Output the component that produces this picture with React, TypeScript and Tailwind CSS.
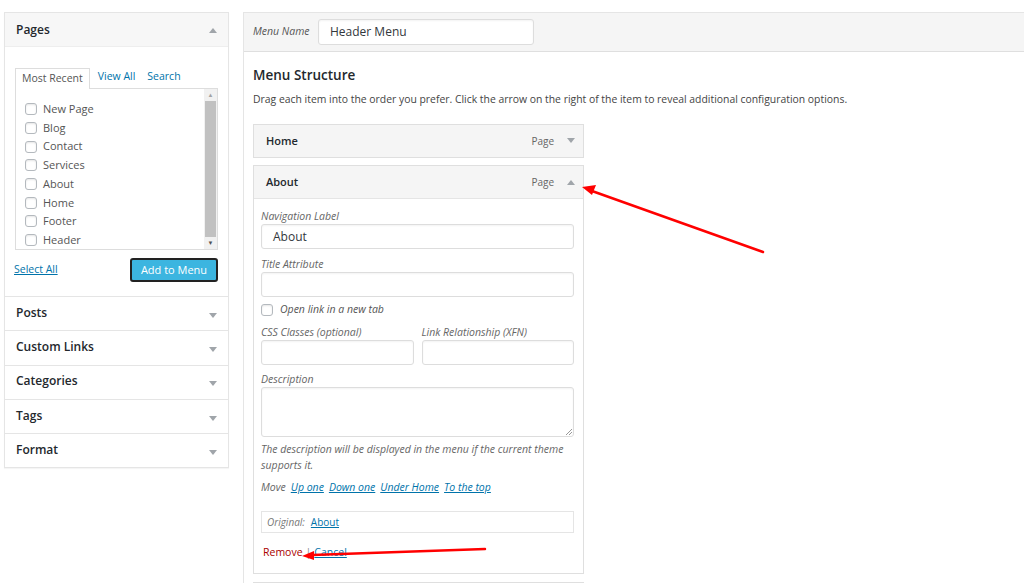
import React from 'react';

const pages = ['New Page', 'Blog', 'Contact', 'Services', 'About', 'Home', 'Footer', 'Header'];
const sections = ['Posts', 'Custom Links', 'Categories', 'Tags', 'Format'];

function Tri({ up }: { up?: boolean }) {
  return (
    <svg width="8" height="6" viewBox="0 0 8 6" className="block">
      {up ? <path d="M0 6 L4 1 L8 6 Z" fill="#a0a5aa" /> : <path d="M0 0 L4 5 L8 0 Z" fill="#a0a5aa" />}
    </svg>
  );
}

function Check() {
  return <span className="inline-block w-[12px] h-[12px] rounded-[3px] border border-[#b4b9be] bg-white shadow-[inset_0_1px_2px_rgba(0,0,0,0.1)] shrink-0" />;
}

function Input({ value, w = 'w-full', h = 'h-[25px]' }: { value?: string; w?: string; h?: string }) {
  return (
    <div className={`${w} ${h} border border-[#ddd] rounded-[3px] bg-white shadow-[inset_0_1px_2px_rgba(0,0,0,0.05)] flex items-center px-[11px] text-[12px] text-[#32373c]`}>
      {value}
    </div>
  );
}

function Label({ children }: { children: React.ReactNode }) {
  return <div className="h-[16px] leading-[16px] text-[10.5px] italic text-[#666]">{children}</div>;
}

export default function App() {
  return (
    <div className="relative w-[1024px] h-[583px] overflow-hidden bg-white" style={{ fontFamily: '"Open Sans", sans-serif' }}>
      <div className="flex items-start pt-[12px]">
        {/* left column */}
        <div className="ml-[4px] w-[225px] border border-[#e5e5e5] bg-white shadow-[0_1px_1px_rgba(0,0,0,0.04)] shrink-0">
          <div className="h-[34px] bg-[#f7f7f7] border-b border-[#eee] flex items-center justify-between pl-[11px] pr-[11px]">
            <span className="text-[12px] font-semibold text-[#23282d]">Pages</span>
            <Tri up />
          </div>
          <div className="px-[10px] pt-[20px] pb-[14px]">
            <div className="flex items-end h-[21px] text-[10.5px]">
              <div className="h-[21px] pb-[1px] px-[6px] border border-b-0 border-[#ddd] bg-white flex items-center text-[#555] relative z-10 -mb-px">Most Recent</div>
              <span className="ml-[8px] h-[21px] pb-[1px] flex items-center text-[#0073aa]">View All</span>
              <span className="ml-[12px] h-[21px] pb-[1px] flex items-center text-[#0073aa]">Search</span>
            </div>
            <div className="relative h-[162px] border border-[#ddd] bg-white">
              <div className="pt-[11px] pl-[9px] flex flex-col">
                {pages.map(p => (
                  <div key={p} className="h-[18.7px] flex items-center gap-[6px] text-[11px] text-[#555]">
                    <Check />
                    <span>{p}</span>
                  </div>
                ))}
              </div>
              <div className="absolute right-0 top-0 bottom-0 w-[13px] bg-[#f1f1f1] flex flex-col items-center">
                <div className="h-[12px] flex items-center text-[6px] text-[#a3a3a3]">▲</div>
                <div className="w-[11px] flex-1 bg-[#c1c1c1]" />
                <div className="h-[12px] flex items-center text-[6px] text-[#505050]">▼</div>
              </div>
            </div>
            <div className="mt-[8px] flex items-center justify-between">
              <span className="text-[10.5px] text-[#0073aa] underline ml-[-1px]">Select All</span>
              <div className="w-[88px] h-[24px] rounded-[3px] border-2 border-[#222] bg-[#3cb5e0] flex items-center justify-center text-[11px] text-white">Add to Menu</div>
            </div>
          </div>
          {sections.map(s => (
            <div key={s} className="h-[34.3px] border-t border-[#e5e5e5] flex items-center justify-between pl-[11px] pr-[11px]">
              <span className="text-[12px] font-semibold text-[#23282d] -mt-[2px]">{s}</span>
              <span className="mt-[4px]"><Tri /></span>
            </div>
          ))}
        </div>

        {/* right column */}
        <div className="ml-[14px] w-[820px] h-[600px] border border-[#e5e5e5] bg-white shrink-0">
          <div className="h-[39px] bg-[#f5f5f5] border-b border-[#dfdfdf] flex items-center pl-[9px]">
            <span className="text-[10.5px] italic text-[#555] w-[65px]">Menu Name</span>
            <Input value="Header Menu" w="w-[216px]" h="h-[26px]" />
          </div>
          <div className="pl-[9px]">
            <div className="mt-[13px] h-[20px] leading-[20px] text-[13.5px] font-semibold text-[#23282d]">Menu Structure</div>
            <div className="mt-[6px] h-[16px] leading-[16px] text-[10.4px] text-[#444]">
              Drag each item into the order you prefer. Click the arrow on the right of the item to reveal additional configuration options.
            </div>
            <div className="mt-[17px] w-[331px] h-[34px] border border-[#dfdfdf] bg-[#f5f5f5] flex items-center justify-between pl-[12px] pr-[8px]">
              <span className="text-[11px] font-semibold text-[#23282d]">Home</span>
              <span className="flex items-center gap-[13px] text-[10px] text-[#666]">Page <Tri /></span>
            </div>
            <div className="mt-[7px] w-[331px] border border-[#dfdfdf]">
              <div className="h-[33px] bg-[#f5f5f5] border-b border-[#e5e5e5] flex items-center justify-between pl-[12px] pr-[8px]">
                <span className="text-[11px] font-semibold text-[#23282d]">About</span>
                <span className="flex items-center gap-[13px] text-[10px] text-[#666]">Page <Tri up /></span>
              </div>
              <div className="pl-[7px] pr-[9px] pt-[9px] pb-[13px]">
                <Label>Navigation Label</Label>
                <Input value="About" />
                <div className="mt-[7px]"><Label>Title Attribute</Label></div>
                <Input />
                <div className="mt-[5px] h-[16px] flex items-center gap-[7px]">
                  <Check />
                  <span className="text-[10.5px] italic text-[#555]">Open link in a new tab</span>
                </div>
                <div className="mt-[6px] grid grid-cols-2 gap-[8px]">
                  <div>
                    <Label>CSS Classes (optional)</Label>
                    <Input h="h-[25px]" />
                  </div>
                  <div>
                    <Label>Link Relationship (XFN)</Label>
                    <Input h="h-[25px]" />
                  </div>
                </div>
                <div className="mt-[6px]"><Label>Description</Label></div>
                <div className="relative h-[50px] border border-[#ddd] rounded-[3px] shadow-[inset_0_1px_2px_rgba(0,0,0,0.05)]">
                  <svg width="7" height="7" viewBox="0 0 7 7" className="absolute right-[1px] bottom-[1px]">
                    <path d="M1 7 L7 1 M4 7 L7 4" stroke="#999" strokeWidth="1" />
                  </svg>
                </div>
                <div className="mt-[4px] text-[10.5px] italic leading-[16px] text-[#666] pr-[10px]">
                  The description will be displayed in the menu if the current theme supports it.
                </div>
                <div className="mt-[6px] h-[16px] leading-[16px] text-[10.5px] italic text-[#666] flex gap-[5px]">
                  <span>Move</span>
                  <span className="text-[#0073aa] underline">Up one</span>
                  <span className="text-[#0073aa] underline">Down one</span>
                  <span className="text-[#0073aa] underline">Under Home</span>
                  <span className="text-[#0073aa] underline">To the top</span>
                </div>
                <div className="mt-[16px] h-[22px] border border-[#e5e5e5] flex items-center pl-[5px] gap-[6px] text-[10px]">
                  <span className="italic text-[#777]">Original:</span>
                  <span className="text-[#0073aa] underline">About</span>
                </div>
                <div className="mt-[11px] h-[16px] leading-[16px] flex items-center text-[10.5px] pl-[2px]">
                  <span className="text-[#a00]">Remove</span>
                  <span className="text-[#888] mx-[3px]">|</span>
                  <span className="text-[#0073aa] underline">Cancel</span>
                </div>
              </div>
            </div>
            <div className="mt-[8px] w-[331px] h-[34px] border border-[#dfdfdf] bg-[#f5f5f5]" />
          </div>
        </div>
      </div>

      {/* annotation arrows */}
      <svg className="absolute inset-0 pointer-events-none" width="1024" height="583" viewBox="0 0 1024 583">
        <line x1="763" y1="252" x2="592" y2="191" stroke="#f00" strokeWidth="2.5" strokeLinecap="round" />
        <path d="M582 187 L596 185 L592 195 Z" fill="#f00" />
        <line x1="485" y1="549" x2="312" y2="555" stroke="#f00" strokeWidth="2.5" strokeLinecap="round" />
        <path d="M302 556 L314 551 L314 560 Z" fill="#f00" />
      </svg>
    </div>
  );
}
